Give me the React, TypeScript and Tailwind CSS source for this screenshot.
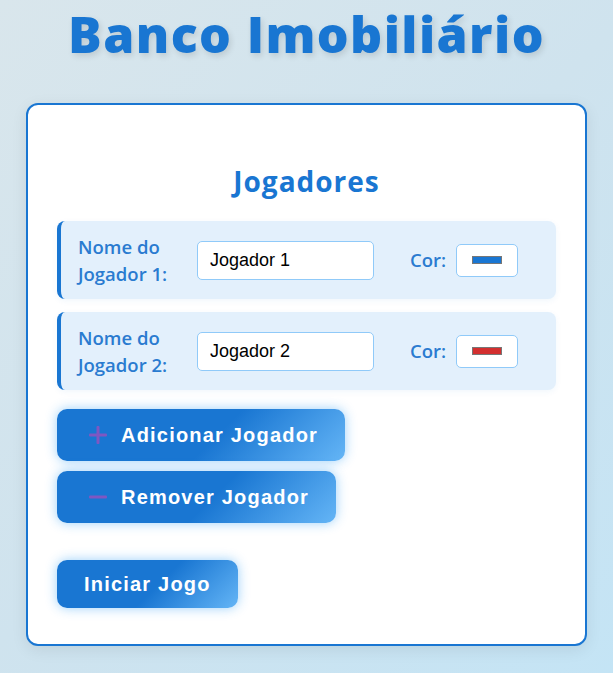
import { useState } from 'react';

type Player = { name: string; color: string };

const PlusIcon = () => (
  <svg width="20" height="20" viewBox="0 0 20 20" className="shrink-0">
    <rect x="8.5" y="1" width="3" height="18" rx="1" fill="#7e57c2" />
    <rect x="1" y="8.5" width="18" height="3" rx="1" fill="#7e57c2" />
  </svg>
);

const MinusIcon = () => (
  <svg width="20" height="20" viewBox="0 0 20 20" className="shrink-0">
    <rect x="1" y="8.5" width="18" height="3" rx="1" fill="#7e57c2" />
  </svg>
);

const btn =
  'flex items-center gap-[13px] rounded-[10px] bg-[linear-gradient(135deg,#1976d2_0%,#1976d2_55%,#64b5f6_100%)] text-white font-bold text-[20px] tracking-[1.2px] shadow-[0_0_12px_rgba(33,150,243,0.45)] font-["Liberation_Sans",Arial,sans-serif]';

export default function App() {
  const [players, setPlayers] = useState<Player[]>([
    { name: 'Jogador 1', color: '#1976d2' },
    { name: 'Jogador 2', color: '#d32f2f' },
  ]);

  return (
    <div className="min-h-[673px] bg-[linear-gradient(135deg,#d9e6ec_0%,#cfe3ee_50%,#c4e4f5_100%)] pb-[28px] font-['Open_Sans',sans-serif]">
      <h1 className="pt-[6px] text-center text-[50px] leading-[56px] font-extrabold tracking-[1.4px] text-[#1976d2] [text-shadow:2px_3px_6px_rgba(0,0,0,0.12)]">
        Banco Imobiliário
      </h1>

      <div className="mx-[26px] mt-[41px] rounded-[12px] border-2 border-[#1976d2] bg-white px-[29px] pt-[56px] pb-[36px] shadow-[0_4px_16px_rgba(0,0,0,0.08)]">
        <h2 className="text-center text-[28px] leading-[40px] font-bold tracking-[1px] text-[#1976d2]">Jogadores</h2>

        <div className="mt-[20px] flex flex-col gap-[13px]">
          {players.map((p, i) => (
            <div
              key={i}
              className="flex h-[78px] items-center rounded-[8px] border-l-4 border-[#1976d2] bg-[#e3f0fc] pl-[17px] pr-[38px] shadow-[0_2px_6px_rgba(25,118,210,0.06)]"
            >
              <label className="flex w-[100px] shrink-0 flex-col text-[18.5px] leading-[27px] font-semibold text-[#2a7bd0]">
                <span>Nome do</span>
                <span>{`Jogador ${i + 1}:`}</span>
              </label>
              <input
                value={p.name}
                onChange={(e) => {
                  const next = [...players];
                  next[i] = { ...p, name: e.target.value };
                  setPlayers(next);
                }}
                className="ml-[19px] h-[39px] w-[177px] rounded-[5px] border border-[#90caf9] bg-white px-[12px] text-[18px] text-black font-['Liberation_Sans',Arial,sans-serif] outline-none"
              />
              <span className="ml-[36px] text-[18.5px] font-semibold text-[#2a7bd0]">Cor:</span>
              <div className="ml-[10px] flex h-[33px] w-[62px] items-center justify-center rounded-[5px] border border-[#90caf9] bg-white">
                <div className="h-[8px] w-[30px] border border-[#777]" style={{ background: p.color }} />
              </div>
            </div>
          ))}
        </div>

        <div className="mt-[19px] flex flex-col items-start gap-[10px]">
          <button
            className={`${btn} h-[52px] pl-[31px] pr-[27px]`}
            onClick={() => setPlayers([...players, { name: `Jogador ${players.length + 1}`, color: '#388e3c' }])}
          >
            <PlusIcon />
            Adicionar Jogador
          </button>
          <button
            className={`${btn} h-[52px] pl-[31px] pr-[27px]`}
            onClick={() => players.length > 2 && setPlayers(players.slice(0, -1))}
          >
            <MinusIcon />
            Remover Jogador
          </button>
          <button className={`${btn} mt-[27px] h-[48px] px-[27px]`}>Iniciar Jogo</button>
        </div>
      </div>
    </div>
  );
}
